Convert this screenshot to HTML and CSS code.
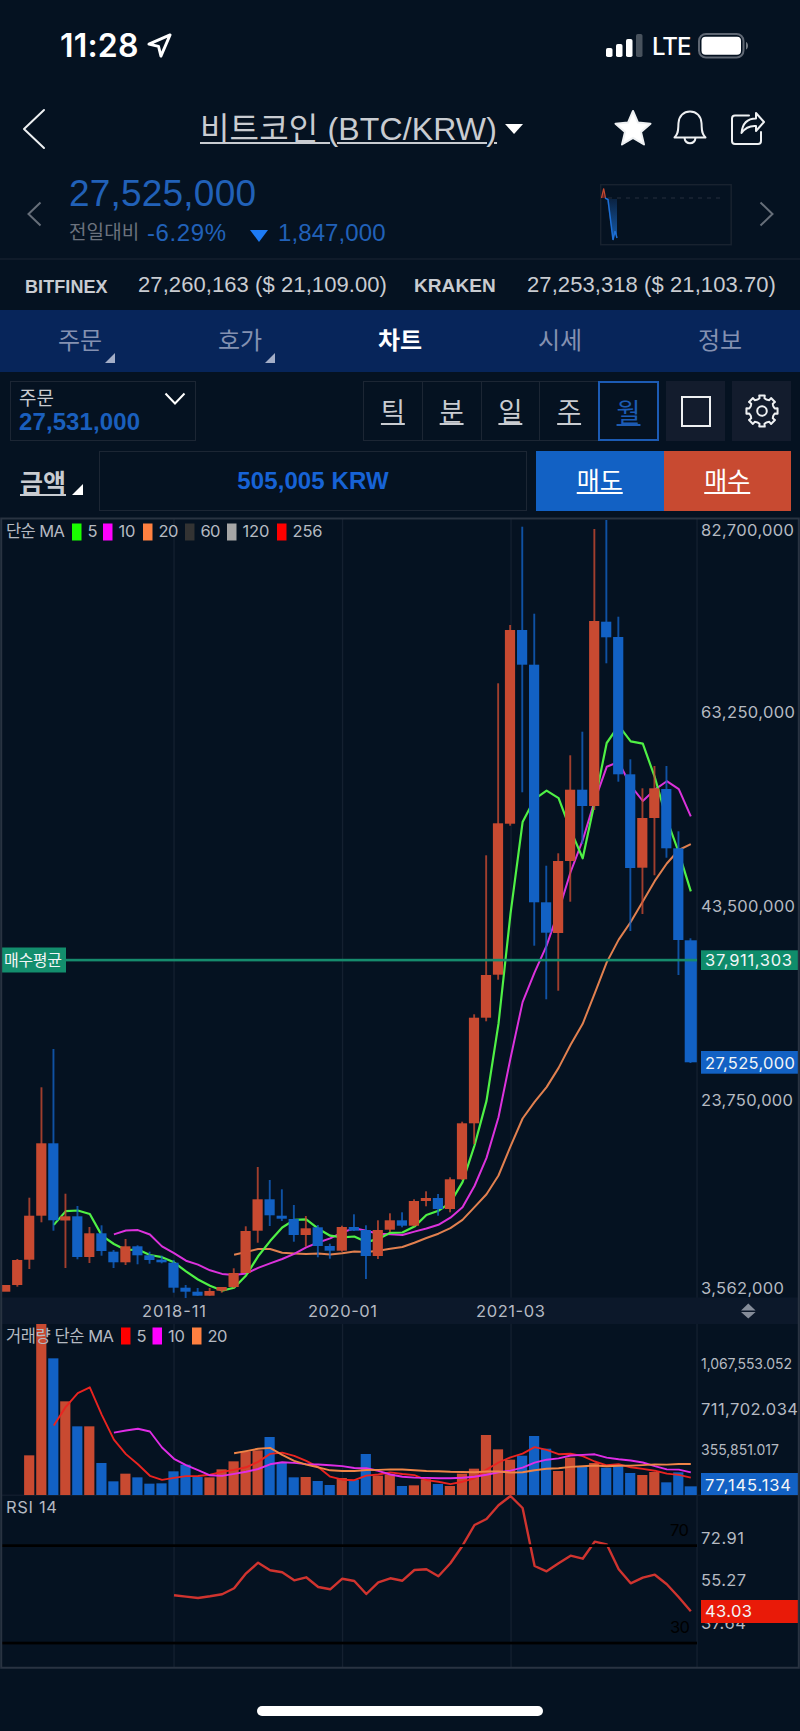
FILE: index.html
```html
<!DOCTYPE html>
<html lang="ko">
<head>
    <meta charset="UTF-8">
    <meta name="viewport" content="width=device-width, initial-scale=1.0">
    <title>비트코인 (BTC/KRW)</title>
    <link rel="stylesheet" href="styles.css">
</head>
<body>

    <div class="status-bar">
        <span class="time">11:28</span>
        <svg class="location" width="25" height="25" viewBox="0 0 26 26"><path d="M2 11.5 24 2 14.5 24 12 14Z" /></svg>
        <svg class="signal" width="38" height="24" viewBox="0 0 38 24">
            <rect x="0" y="14" width="6.5" height="9" rx="1.8" />
            <rect x="10" y="10" width="6.5" height="13" rx="1.8" />
            <rect x="20" y="5" width="6.5" height="18" rx="1.8" />
            <rect x="30" y="0" width="6.5" height="23" rx="1.8" opacity="0.27" />
        </svg>
        <span class="network">LTE</span>
        <svg class="battery" width="52" height="26" viewBox="0 0 52 26">
            <rect x="1" y="1" width="44.500" height="23.500" rx="7" class="battery-case" />
            <rect x="3.500" y="3.800" width="39.500" height="18" rx="4" />
            <path d="M48 9c2.700 1 2.700 6.500 0 7.500Z" opacity="0.45" />
        </svg>
    </div>

    <header class="title-bar">
        <svg class="back" width="24" height="42" viewBox="0 0 24 42"><path d="M22 2 2 21 22 40" /></svg>
        <h1 class="title"><span>비트코인 (BTC/KRW)</span><i class="caret"></i></h1>
        <div class="title-icons">
            <svg width="38" height="38" viewBox="0 0 38 38"><path class="filled" d="M19 2l5 11.600 12.500 1.100-9.500 8.300 3 12.500-11-6.700-11 6.700 3-12.500-9.500-8.300 12.500-1.100Z" /></svg>
            <svg width="38" height="38" viewBox="0 0 38 38"><path d="M3.500 28.500C8 24 7 20 7.500 14 8 7 12.500 2.500 19 2.500S30 7 30.500 14C31 20 30 24 34.500 28.500ZM13.500 29C14.500 36 23.500 36 24.500 29" /></svg>
            <svg width="38" height="38" viewBox="0 0 38 38"><path d="M21 6.500H7Q4 6.500 4 9.500V32Q4 35 7 35H30Q33 35 33 32V23M28 4 36 13 28 22V17C21 16.500 17 19 13.500 24 14.500 14 20 9.500 28 9.500Z" /></svg>
        </div>
    </header>

    <section class="price">
        <svg class="nav" width="15" height="26" viewBox="0 0 15 26"><path d="M13.500 1.500 1.500 13 13.500 24.500" /></svg>
        <div class="price-info">
            <div class="price-now">27,525,000</div>
            <div class="price-diff">
                <span class="label">전일대비</span>
                <span class="rate">-6.29%</span>
                <i class="down"></i>
                <span>1,847,000</span>
            </div>
        </div>
        <svg class="spark" width="132" height="62" viewBox="0 0 132 62">
            <defs>
                <linearGradient id="fall" x1="0" y1="0" x2="0" y2="1">
                    <stop offset="0" stop-color="#0b2342" />
                    <stop offset="1" stop-color="#155cae" />
                </linearGradient>
            </defs>
            <rect x="0.700" y="0.700" width="130.500" height="60" fill="none" stroke="#18222f" stroke-width="1.500" />
            <path d="M8 14H125" stroke="#1b2634" stroke-width="1.500" stroke-dasharray="4 5" />
            <path d="M7 15H17V54L15 46 13 56Z" fill="url(#fall)" />
            <path d="M1.500 14 3.700 4.500 5.500 14" fill="#5d2026" stroke="#c84a31" stroke-width="1.200" />
            <path d="M5 14 8 15.500 13 56 15 47 17 54" fill="none" stroke="#1d6fd6" stroke-width="1.500" />
        </svg>
        <svg class="nav next" width="15" height="26" viewBox="0 0 15 26"><path d="M1.500 1.500 13.500 13 1.500 24.500" /></svg>
    </section>

    <section class="ticker">
        <b class="bitfinex">BITFINEX</b><span class="bitfinex-price">27,260,163 ($ 21,109.00)</span>
        <b class="kraken">KRAKEN</b><span>27,253,318 ($ 21,103.70)</span>
    </section>

    <nav class="tabs">
        <a class="more">주문</a>
        <a class="more">호가</a>
        <a class="active">차트</a>
        <a>시세</a>
        <a>정보</a>
    </nav>

    <div class="toolbar">
        <div class="order-box">
            <span>주문</span>
            <b>27,531,000</b>
            <svg width="22" height="14" viewBox="0 0 22 14"><path d="M1.500 1.500 11 11.500 20.500 1.500" /></svg>
        </div>
        <div class="periods">
            <span>틱</span><span>분</span><span>일</span><span>주</span><span class="selected">월</span>
        </div>
        <div class="tool"><i class="square"></i></div>
        <div class="tool">
            <svg width="34" height="34" viewBox="-17 -17 34 34"><path id="gear" /><circle r="4.800" /></svg>
        </div>
    </div>

    <div class="order-row">
        <span class="amount">금액</span><i class="corner"></i>
        <div class="amount-value">505,005 KRW</div>
        <div class="sell">매도</div>
        <div class="buy">매수</div>
    </div>

    <svg id="chart" class="chart" width="800" height="1152" viewBox="0 517 800 1152"></svg>

    <div class="home"></div>

    <script>
        const RED = "#c84a31";
        const BLUE = "#1261c4";
        const STEP = 12.02;
        const chart = document.getElementById("chart");

        // [color, body top, body bottom, wick top, wick bottom]
        const candles = [
            ["r", 1285, 1291.7, 1285, 1291], ["r", 1260, 1285, 1259, 1286.7], ["r", 1215.7, 1259.7, 1197.7, 1269],
            ["r", 1143.3, 1215.7, 1087.3, 1222.3], ["b", 1143.3, 1220.3, 1049, 1230.7], ["r", 1216.3, 1220.5, 1193.7, 1268],
            ["b", 1216.3, 1257, 1206, 1259.3], ["r", 1233.3, 1257, 1227, 1263], ["b", 1233.3, 1251, 1225.3, 1255.7],
            ["b", 1251.7, 1262.3, 1250, 1268], ["r", 1246.3, 1262.3, 1239, 1265], ["b", 1246.3, 1255.3, 1245.3, 1264.3],
            ["b", 1255.3, 1260, 1251.7, 1263.7], ["b", 1259.7, 1262.3, 1255.7, 1263.3], ["b", 1262.7, 1287.7, 1260, 1292.7],
            ["b", 1287.7, 1291.7, 1285, 1298], ["b", 1291.7, 1295.7, 1288, 1295.7], ["r", 1291, 1295.7, 1288, 1295.7],
            ["r", 1287, 1290.7, 1287, 1292.7], ["r", 1273, 1287, 1268.3, 1288], ["r", 1231, 1273, 1226.3, 1273],
            ["r", 1199.3, 1230.7, 1167, 1242.7], ["b", 1199.3, 1215.3, 1180, 1226], ["b", 1215.7, 1218.7, 1189.3, 1221],
            ["b", 1219, 1235, 1205, 1241.7], ["r", 1228.3, 1235, 1216, 1246.7], ["b", 1227.3, 1246, 1225, 1257.3],
            ["b", 1246, 1250.7, 1243.7, 1258.7], ["r", 1227, 1250.7, 1225.7, 1251.7], ["b", 1227, 1230.7, 1214.3, 1231],
            ["b", 1230, 1256, 1225.3, 1279], ["r", 1230, 1256, 1220.3, 1259], ["r", 1220.3, 1229.7, 1213.3, 1232],
            ["b", 1220.3, 1225.7, 1212.3, 1227.3], ["r", 1201, 1225.7, 1199.3, 1226.3], ["r", 1198, 1201, 1191.3, 1206.3],
            ["b", 1198, 1209, 1194, 1215.7], ["r", 1179.3, 1209, 1177.3, 1212.3], ["r", 1123.3, 1179.3, 1121.7, 1180],
            ["r", 1017.7, 1123.3, 1014.3, 1144], ["r", 975, 1017.7, 855.3, 1021.3], ["r", 823.3, 974.7, 683.3, 979.7],
            ["r", 630, 823.7, 625, 825.7], ["b", 630, 664.7, 526.7, 792.3], ["b", 664.7, 902.3, 613.7, 945.7],
            ["b", 902.3, 932.7, 865.7, 999.3], ["r", 861, 933, 853.3, 990.7], ["r", 789.7, 861, 755.3, 901.7],
            ["b", 789.7, 806, 731.7, 844], ["r", 621, 806, 529, 810], ["b", 621.7, 637.3, 520, 663.3],
            ["b", 637, 774.3, 616.7, 781.7], ["b", 774.3, 868, 759.3, 931], ["r", 818, 867.7, 788.3, 914],
            ["r", 788.3, 818, 766, 875.3], ["b", 789, 848.3, 766, 857.7], ["b", 848.3, 940, 831.3, 975],
            ["b", 940.3, 1062.3, 938.3, 1063]
        ];

        const volumes = [
            0, 0, 119, 513, 410, 281, 206, 206, 96, 41, 64, 53, 34, 35, 71, 91, 54, 53, 77, 101,
            131, 134, 174, 96, 53, 54, 42, 30, 51, 45, 123, 58, 62, 27, 29, 47, 33, 27, 64, 79,
            180, 137, 106, 118, 177, 139, 72, 112, 84, 96, 82, 88, 66, 60, 69, 38, 68, 26
        ].map(v => v / 3);

        // starts at the 15th candle
        const rsi = [
            1595.3, 1596.6, 1598, 1596.3, 1594.3, 1588.3, 1573.3, 1562.7, 1570.3, 1572.3, 1580.3,
            1577.3, 1587, 1589.3, 1578.7, 1581, 1594, 1582.3, 1578.3, 1580.7, 1570, 1569.3, 1576.3,
            1563.3, 1545.7, 1525, 1519, 1505.3, 1496, 1508, 1566, 1571.3, 1563.3, 1555.7, 1558.7,
            1541.7, 1544.3, 1569.3, 1583.3, 1577.7, 1574.7, 1584.3, 1597.3, 1611.3
        ];

        let out = "";

        function centerX(i) {
            return 5.3 + STEP * i;
        }

        function rect(x, y, w, h, fill) {
            out += `<rect x="${x}" y="${y}" width="${w}" height="${h}" fill="${fill}"/>`;
        }

        function text(str, x, y, width, cls = "") {
            out += `<text x="${x}" y="${y}" textLength="${width}" class="${cls}">${str}</text>`;
        }

        function line(values, start, color, width = 2) {
            const points = values.map((y, i) => `${(centerX(i + start) + 0.4).toFixed(1)},${y.toFixed(1)}`).join(" ");
            out += `<polyline points="${points}" stroke="${color}" stroke-width="${width}"/>`;
        }

        function average(values, n) {
            const result = [];
            for (let i = n - 1; i < values.length; i++) {
                let sum = 0;
                for (let j = 0; j < n; j++) sum += values[i - j];
                result.push(sum / n);
            }
            return result;
        }

        function bar(i, top, bottom, color) {
            const last = i === candles.length - 1;
            const left = Math.max(2, centerX(i) - (last ? 5.7 : 5.2));
            const right = centerX(i) + (last ? 6.4 : 5);
            rect(left.toFixed(1), top, (right - left).toFixed(1), (bottom - top).toFixed(1), color);
        }

        // panels and grid
        [174, 342.5, 511, 697].forEach(x => rect(x - 0.6, 519, 1.3, 1148, "#142030"));
        rect(2, 1297.5, 796, 26.5, "#0c182a");
        rect(2, 1494.6, 796, 1.2, "#142030");

        // price
        const closes = candles.map(c => c[0] === "r" ? c[1] : c[2]);
        line(average(closes, 20), 19, "#e2804f", 2);
        line(average(closes, 10), 9, "#dc32dc", 2);
        line(average(closes, 5), 4, "#4ff045", 2.2);
        candles.forEach((c, i) => {
            const color = c[0] === "r" ? RED : BLUE;
            out += `<g opacity="0.8">`;
            rect((centerX(i) - 0.9).toFixed(1), c[3], 1.9, (c[4] - c[3]).toFixed(1), color);
            out += `</g>`;
            bar(i, c[1], c[2], color);
        });
        rect(2, 958.8, 695, 2.6, "#168b6d");
        rect(2, 947.5, 64, 25, "#138e6d");
        text("매수평균", 4, 966, 58, "tag korean");

        // volume
        candles.forEach((c, i) => bar(i, 1495 - volumes[i], 1495, c[0] === "r" ? RED : BLUE));
        const tops = volumes.map(v => 1495 - v);
        line(average(tops, 5), 4, "#ea2420", 1.9);
        line(average(tops, 10), 9, "#e02de6", 1.9);
        line(average(tops, 20), 19, "#f08547", 1.9);

        // rsi
        line(rsi, 14, "#d0342f", 2.4);
        rect(2, 1544.3, 695, 2.7, "#000");
        rect(2, 1641.7, 695, 2.7, "#000");
        text("70", 670, 1536, 19, "level");
        text("30", 670, 1633, 20, "level");

        // legends
        text("단순 MA", 6, 537.3, 59);
        [[72, "#1aff00", "5", 8], [103, "#ff00ff", "10", 17], [143, "#ff8040", "20", 20],
         [185, "#333333", "60", 20], [227, "#a6a6a6", "120", 27], [277, "#ff0000", "256", 30]].forEach(l => {
            rect(l[0], 523.5, 9.5, 17, l[1]);
            text(l[2], l[0] + 15.5, 537.3, l[3]);
        });
        text("거래량 단순 MA", 6, 1341.7, 108);
        [[121, "#ff0000", "5", 8], [152.5, "#ff00ff", "10", 17], [192, "#ff8040", "20", 20]].forEach(l => {
            rect(l[0], 1327.5, 9.5, 17, l[1]);
            text(l[2], l[0] + 15.5, 1341.7, l[3]);
        });
        text("RSI 14", 6, 1513, 51);

        // axis labels
        text("82,700,000", 701, 536.3, 93);
        text("63,250,000", 701, 717.7, 94);
        text("43,500,000", 701, 911.7, 94);
        text("23,750,000", 701, 1105.7, 92);
        text("3,562,000", 701, 1294, 83);
        text("2018-11", 142, 1317.3, 64);
        text("2020-01", 308, 1317.3, 69);
        text("2021-03", 476, 1317.3, 69);
        text("1,067,553.052", 701, 1368.7, 91, "small");
        text("711,702.034", 701, 1415, 97);
        text("355,851.017", 701, 1454.7, 78, "small");
        text("72.91", 701, 1543.7, 43);
        text("55.27", 701, 1586, 45);
        text("37.64", 701, 1629.3, 45);

        rect(701, 950.3, 97, 19.7, "#0f8c6b");
        text("37,911,303", 705, 966, 87, "tag");
        rect(701, 1051, 97, 22.7, BLUE);
        text("27,525,000", 705, 1068.7, 90, "tag");
        rect(701, 1473, 97, 22, BLUE);
        text("77,145.134", 705, 1490.7, 86, "tag");
        rect(701, 1600, 97, 23, "#e91a08");
        text("43.03", 705, 1617.3, 47, "tag");

        out += `<path d="M741 1310.500 748.300 1303.500 755.600 1310.500ZM741 1312 755.600 1312 748.300 1318.500Z" fill="#858c99"/>`;
        out += `<path d="M1.200 518.500H798.800V1667.800H1.200Z" fill="none" stroke="#293341" stroke-width="2"/>`;

        chart.innerHTML = out;

        // eight-tooth gear outline
        let gear = "";
        for (let i = 0; i < 8; i++) {
            [[-20, 12.3], [-11, 13], [-10, 15.8], [10, 15.8], [11, 13], [20, 12.3]].forEach(([deg, r]) => {
                const a = (i * 45 + deg) * Math.PI / 180;
                gear += (gear ? "L" : "M") + (r * Math.cos(a)).toFixed(2) + " " + (r * Math.sin(a)).toFixed(2);
            });
        }
        document.getElementById("gear").setAttribute("d", gear + "Z");
    </script>

</body>
</html>
```
FILE: styles.css
```css
* {
    box-sizing: border-box;
}
body {
    margin: 0;
    width: 800px;
    height: 1731px;
    overflow: hidden;
    background: #051221;
    color: #c9ccd1;
    font-family: "Liberation Sans", "Noto Sans CJK KR", sans-serif;
}
svg {
    display: block;
    flex: none;
}
.status-bar {
    display: flex;
    height: 91px;
    padding: 33px 0 0 60px;
    color: #fff;
    font-family: Inter, sans-serif;
}
.status-bar svg {
    fill: #fff;
}
.time {
    width: 87px;
    font-size: 32px;
    font-weight: 600;
    line-height: 26px;
    letter-spacing: 0.2px;
    white-space: nowrap;
}
.status-bar .location {
    fill: none;
    stroke: #fff;
    stroke-width: 3;
    stroke-linejoin: round;
}
.signal {
    margin: 1px 0 0 434px;
}
.network {
    width: 46px;
    margin-left: 8px;
    font-size: 24px;
    font-weight: 500;
    line-height: 27px;
    letter-spacing: -1px;
}
.status-bar .battery-case {
    fill: none;
    stroke: #5f6773;
    stroke-width: 2;
}
.title-bar {
    display: flex;
    height: 84px;
    padding: 17px 34px 0 22px;
    fill: none;
    stroke: #eef0f2;
    stroke-width: 2;
    stroke-linejoin: round;
    stroke-linecap: round;
}
.title {
    display: flex;
    margin: 0 0 0 154px;
    width: 401px;
    font-size: 32px;
    font-weight: normal;
    line-height: 43px;
    letter-spacing: 0.15px;
    white-space: nowrap;
}
.title span {
    text-decoration: underline;
    text-decoration-thickness: 2px;
    text-underline-offset: 2px;
}
.caret {
    margin: 16px 0 0 8px;
    width: 18px;
    height: 10px;
    background: #fff;
    clip-path: polygon(0 0, 100% 0, 50% 100%);
}
.title-icons {
    display: flex;
    gap: 19px;
    margin: 1px 0 0 13px;
}
.filled {
    fill: #fff;
}
.price {
    display: flex;
    height: 85px;
    padding-left: 27px;
    color: #2161b8;
    border-bottom: 2px solid #101b2a;
}
.nav {
    margin-top: 26px;
    fill: none;
    stroke: #666e79;
    stroke-width: 2;
}
.next {
    margin-left: 27px;
}
.price-info {
    width: 558px;
    padding-left: 27px;
}
.price-now {
    font-size: 37px;
    line-height: 37px;
    letter-spacing: 0.2px;
}
.price-diff {
    display: flex;
    height: 26px;
    margin-top: 7px;
    font-size: 24px;
    line-height: 28px;
    letter-spacing: 0.1px;
}
.price-diff .label {
    width: 78px;
    color: #6c737e;
    font-size: 19px;
    line-height: 28px;
}
.price-diff .rate {
    width: 103px;
    letter-spacing: 0.6px;
}
.down {
    width: 18px;
    height: 12px;
    margin: 11px 10px 0 0;
    background: #1d7bf5;
    clip-path: polygon(0 0, 100% 0, 50% 100%);
}
.spark {
    margin-top: 9px;
}
.ticker {
    display: flex;
    height: 50px;
    padding: 11px 0 0 25px;
    font-size: 22px;
    line-height: 28px;
    letter-spacing: 0.08px;
    white-space: nowrap;
}
.ticker b {
    font-size: 18px;
    line-height: 32px;
}
.bitfinex {
    width: 113px;
}
.bitfinex-price {
    width: 276px;
}
.ticker .kraken {
    width: 113px;
    font-size: 19px;
    line-height: 30px;
}
.tabs {
    display: flex;
    height: 62px;
    background: #07255a;
}
.tabs a {
    position: relative;
    flex: 1;
    text-align: center;
    font-size: 24px;
    line-height: 62px;
    color: #8491b1;
}
.tabs .active {
    color: #fff;
    font-weight: bold;
}
.more::after {
    content: "";
    position: absolute;
    left: 105px;
    top: 43px;
    width: 10px;
    height: 10px;
    background: #a3aec7;
    clip-path: polygon(100% 0, 100% 100%, 0 100%);
}
.toolbar {
    display: flex;
    height: 79px;
    padding: 9px 8px 0 10px;
}
.order-box {
    position: relative;
    width: 186px;
    height: 60px;
    padding: 6px 8px;
    border: 1.500px solid #1c2634;
}
.order-box span, .order-box b {
    display: block;
    font-size: 19px;
    line-height: 22px;
}
.order-box b {
    font-size: 24px;
    line-height: 23px;
    letter-spacing: 0.1px;
    color: #1a5fbd;
}
.order-box svg {
    position: absolute;
    right: 9px;
    top: 10px;
    fill: none;
    stroke: #fff;
    stroke-width: 2;
}
.periods {
    display: flex;
    width: 296px;
    height: 60px;
    margin-left: 167px;
    border: 1.500px solid #1c2634;
}
.periods span {
    flex: 1;
    text-align: center;
    font-size: 26px;
    line-height: 60px;
    text-decoration: underline;
    text-underline-offset: 2px;
    text-decoration-thickness: 1.500px;
    border-right: 1.500px solid #1c2634;
}
.periods .selected {
    flex: none;
    width: 61px;
    margin: -1px;
    border: 2px solid #1c5bb4;
    color: #1c5bb4;
}
.tool {
    display: flex;
    align-items: center;
    justify-content: center;
    width: 59px;
    height: 60px;
    margin-left: 7px;
    background: #131c2d;
}
.tool svg {
    fill: none;
    stroke: #eef0f2;
    stroke-width: 2;
    stroke-linejoin: round;
}
.square {
    width: 30px;
    height: 31px;
    border: 2px solid #eef0f2;
}
.order-row {
    display: flex;
    height: 66px;
    font-size: 25px;
}
.amount {
    margin-left: 20px;
    width: 52px;
    font-weight: bold;
    line-height: 65px;
    text-decoration: underline;
    text-decoration-thickness: 2px;
    text-underline-offset: 2px;
}
.corner {
    width: 11px;
    height: 11px;
    margin-top: 33px;
    background: #fff;
    clip-path: polygon(100% 0, 100% 100%, 0 100%);
}
.amount-value {
    width: 428px;
    height: 60px;
    margin-left: 16px;
    border: 1.500px solid #1c2634;
    text-align: center;
    font-size: 24px;
    font-weight: bold;
    line-height: 58px;
    letter-spacing: 0.1px;
    color: #1763d6;
}
.sell, .buy {
    width: 127.500px;
    height: 60px;
    background: #1261c4;
    color: #fff;
    text-align: center;
    line-height: 60px;
    text-decoration: underline;
    text-decoration-thickness: 2px;
    text-underline-offset: 2px;
}
.sell {
    margin-left: 9px;
}
.buy {
    background: #c84a31;
}
.chart text {
    fill: #b5bac2;
    font-family: Inter, "Noto Sans CJK KR", sans-serif;
    font-size: 16.500px;
}
.chart .small {
    font-size: 14px;
}
.chart .tag {
    fill: #f2f5f7;
}
.chart .korean {
    font-size: 16px;
}
.chart .level {
    fill: #000;
}
.chart polyline {
    fill: none;
    stroke-linejoin: round;
}
.home {
    width: 286px;
    height: 10px;
    margin: 37px auto 0;
    border-radius: 5px;
    background: #fff;
}
```
